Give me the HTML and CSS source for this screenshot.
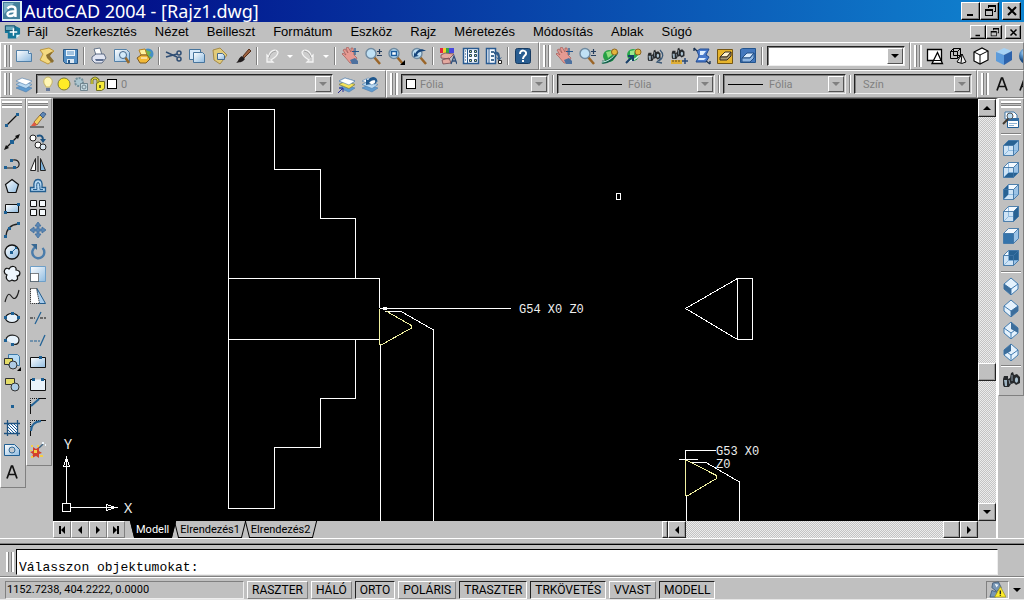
FILE: index.html
```html
<!DOCTYPE html>
<html lang="hu">
<head>
<meta charset="utf-8">
<title>AutoCAD 2004 - [Rajz1.dwg]</title>
<link rel="stylesheet" href="styles.css">
</head>
<body>
<svg class="sprite" aria-hidden="true">
  <defs>
    <linearGradient id="paper" x1="0" y1="0" x2="1" y2="1"><stop offset="0" stop-color="#fff"/><stop offset="1" stop-color="#8fbbe0"/></linearGradient>
    <radialGradient id="ball" cx=".35" cy=".3"><stop offset="0" stop-color="#cfe6fa"/><stop offset=".5" stop-color="#5a93c8"/><stop offset="1" stop-color="#1c4c82"/></radialGradient>
    <pattern id="diag" width="3" height="3" patternUnits="userSpaceOnUse"><path d="M0 0l3 3" stroke="#1d5f9e"/></pattern>
    <g id="hand"><path d="M2 3l2-1 3 4-2-5 2-1 3 5 0-4 2 0 1 7 3 3-3 5H9L4 10 1 7l1-1 3 2z" fill="#e59a92" stroke="#a55a58" stroke-width=".7"/><path d="M9 13l5-2 3 3v3h-6z" fill="#4d719f"/><path d="M14 1v7M11 4.500h7" stroke="#27578c" stroke-width="1.200"/></g>
    <g id="lens"><path d="M10 10l6 7" stroke="#9a6528" stroke-width="2.500"/><circle cx="7" cy="6.500" r="5" fill="#bfe0f4" stroke="#6f8aa0" stroke-width="1.400"/></g>
    <g id="cube"><path d="M1.500 6.500h10v10h-10z" fill="#cfe4f6"/><path d="M1.500 6.500l5-5h10l-5 5z" fill="#f3f9ff"/><path d="M11.500 6.500l5-5v10l-5 5z" fill="#9cc3e6"/></g>
    <path id="wire" d="M6.500 1.500v10h10M6.500 11.500l-5 5" fill="none" stroke="#7fb0da" stroke-width=".8"/>
    <path id="edges" d="M1.500 6.500h10v10h-10zM1.500 6.500l5-5h10l-5 5M16.500 1.500v10l-5 5" fill="none" stroke="#3f75a6" stroke-width=".9"/>
    <g id="iso"><path d="M9 1l7 6v5l-7 6-7-6V7z" fill="#e5f2fd" stroke="#417baf"/><path d="M2 7l7 5 7-5M9 12v6" fill="none" stroke="#417baf"/></g>
    <g id="binos"><path d="M1 8l1-3h4v3l2-1 1-5 2-1 1 3 3-1 3 3v6l-4 2-2-2-3 1-2 3H2l-1-2z" fill="#26292c"/><path d="M2 9h3v6H3z" fill="#9fb4c2"/><ellipse cx="14.500" cy="9" rx="1.600" ry="2.800" fill="#a9c0cf"/><path d="M10 4v6M7 9l1 4" stroke="#8b9aa6"/></g>
    <g id="stack"><path d="M1 13l6-3 10 3-6 4z" fill="#5f9bd0" stroke="#4e7cab" stroke-width=".6"/><path d="M1 9.500l6-3 10 3-6 4z" fill="#b9d9f2" stroke="#4e7cab" stroke-width=".6"/><path d="M1 6l6-3 10 3-6 4z" fill="#fff" stroke="#4e7cab" stroke-width=".6"/></g>
  </defs>
  <symbol id="i-new" viewBox="0 0 18 18"><path d="M1.500 3.500h12l3 3v8h-15z" fill="url(#paper)" stroke="#5280a8"/><path d="M13.500 3.500v3h3" fill="#fff" stroke="#5280a8"/></symbol>
  <symbol id="i-open" viewBox="0 0 18 18"><path d="M2 3l9-2 5 3-5 5 2 6-3 2-8-4 3-6z" fill="#f4d980" stroke="#b58a28" stroke-width=".8"/><path d="M8 8l7-4-3 5 4 5-2 2-5-5" fill="#8a6f31"/></symbol>
  <symbol id="i-save" viewBox="0 0 18 18"><path d="M2.500 2.500h14v14h-12l-2-2z" fill="#548fc4" stroke="#285784"/><path d="M5 3h9v6H5z" fill="#edf5fb"/><path d="M6 5h7M6 7h7" stroke="#548fc4"/><path d="M6 12h7v4H6z" fill="#dce9f4"/><path d="M7 13h2v3H7z" fill="#285784"/></symbol>
  <symbol id="i-print" viewBox="0 0 18 18"><path d="M4 2l6-1 2 7H6z" fill="#fff" stroke="#66758a"/><path d="M2 10l4-3h8l2 4-4 5H5l-3-3z" fill="#e1e5f2" stroke="#5c6a82"/><path d="M5 12h9l-1 2H6z" fill="#5d6f91"/></symbol>
  <symbol id="i-preview" viewBox="0 0 18 18"><path d="M1.500 2.500h12l3 3v9h-15z" fill="url(#paper)" stroke="#5280a8"/><path d="M12 10l4 6" stroke="#986a2b" stroke-width="2.500"/><circle cx="10" cy="8" r="3.500" fill="#d3eafa" stroke="#46678a"/></symbol>
  <symbol id="i-publish" viewBox="0 0 18 18"><circle cx="12" cy="7" r="5.500" fill="#458fc5"/><path d="M10 3l5 2-2 4 3 1-3 3-3-6z" fill="#70b650"/><path d="M3 3l6-1 2 6H5z" fill="#fff2a0" stroke="#b7811d"/><path d="M1 11l4-3h6l3 4-4 4H4z" fill="#f2b937" stroke="#7d5b24"/><path d="M5 11h6" stroke="#fff"/></symbol>
  <symbol id="i-cut" viewBox="0 0 18 18"><path d="M1 5l11 5M1 10l11-3" stroke="#304e74" stroke-width="1.500"/><circle cx="14" cy="6" r="2" fill="none" stroke="#304e74" stroke-width="1.500"/><circle cx="14" cy="12" r="2" fill="none" stroke="#304e74" stroke-width="1.500"/></symbol>
  <symbol id="i-copyclip" viewBox="0 0 18 18"><path d="M1.500 2.500h11v10h-11z" fill="#d9eafa" stroke="#47749c"/><path d="M5.500 5.500h9l2 2v8h-11z" fill="url(#paper)" stroke="#47749c"/></symbol>
  <symbol id="i-paste" viewBox="0 0 18 18"><path d="M2 3l7-2 7 7-7 9-6-4z" fill="#e1cb7a" stroke="#a58a48"/><path d="M6.500 6.500h5l2 2v4h-7z" fill="url(#paper)" stroke="#45698b"/></symbol>
  <symbol id="i-brush" viewBox="0 0 18 18"><path d="M9 9l6-7 2 2-7 7z" fill="#9c6240" stroke="#552e1a"/><path d="M8 9l3 3c-3 4-6 3-9 4 3-2 2-5 6-7z" fill="#201c1d"/></symbol>
  <symbol id="i-undo" viewBox="0 0 18 18"><path d="M4 8v7h6l-2-2q7-4 7-8-2-3-6-1Q6 6 6 10z" fill="#cdcdcd" stroke="#f4f4f4" stroke-width="1.300"/><path d="M6 11q1-6 7-7" fill="none" stroke="#a4a4a4"/></symbol>
  <symbol id="i-redo" viewBox="0 0 18 18"><path d="M14 8v7H8l2-2Q3 9 3 5q2-3 6-1 3 2 3 6z" fill="#cdcdcd" stroke="#f4f4f4" stroke-width="1.300"/><path d="M12 11q-1-6-7-7" fill="none" stroke="#a4a4a4"/></symbol>
  <symbol id="i-pan" viewBox="0 0 18 18"><use href="#hand"/></symbol>
  <symbol id="i-zoomrt" viewBox="0 0 18 18"><use href="#lens"/><path d="M15.500 2v5M13 4.500h5M13 8.500h5" stroke="#243d5d" stroke-width="1.200"/></symbol>
  <symbol id="i-zoomwin" viewBox="0 0 18 18"><use href="#lens"/><path d="M4.500 4.500h5v4h-5z" fill="#fff" stroke="#1b5c9d" stroke-width="1.500"/><path d="M18 13v5h-5z"/></symbol>
  <symbol id="i-zoomprev" viewBox="0 0 18 18"><use href="#lens"/><path d="M4 5v5l5-1-2-1c1-3 4-4 9-4-4-3-9-2-11 3z" fill="#15447b"/></symbol>
  <symbol id="i-props" viewBox="0 0 18 18"><path d="M1 1h3v5H1z" fill="#df2742"/><path d="M4 1h3v5H4z" fill="#efcf2f"/><path d="M7 1h3v5H7z" fill="#36a745"/><path d="M10 1h5v5h-5z" fill="#4848dd"/><path d="M2 8l4-2 9 1-5 5-8-1zM3 13l7-2 2 5-8 1z" fill="#e4aaa0" stroke="#754951" stroke-width=".8"/><path d="M12 17l3-8 3 8M13 14h4" fill="none" stroke="#2e4e7a" stroke-width="1.300"/></symbol>
  <symbol id="i-design" viewBox="0 0 18 18"><path d="M1.500 1.500h15v15h-15z" fill="#f6faff" stroke="#285a91" stroke-width="1.500"/><path d="M5.500 2v14" stroke="#285a91"/><path d="M3 4h1M3 7h1M3 10h1M3 13h1" stroke="#244667"/><path d="M7.500 3.500h2v2h-2zM12.500 3.500h2v2h-2zM7.500 7.500h2v2h-2zM12.500 7.500h2v2h-2zM7.500 12.500h2v2h-2zM12.500 12.500h2v2h-2z" fill="#dbe98e" stroke="#234461"/></symbol>
  <symbol id="i-palette" viewBox="0 0 18 18"><path d="M1.500 1.500h9v15h-9z" fill="#f4f9ff" stroke="#285a91" stroke-width="1.500"/><path d="M4 2v14" stroke="#285a91"/><path d="M6 4h3v2H6zM6 8h3v2H6zM6 12h3v2H6z" fill="#456d93"/><path d="M9 5q6-2 6 6l2-1-3 4-3-4 2 1q0-4-4-4z" fill="#315b89"/><path d="M13.500 13.500h3v3h-3z" fill="#fff" stroke="#222"/></symbol>
  <symbol id="i-help" viewBox="0 0 18 18"><rect x="1.500" y="1.500" width="15" height="15" rx="2" fill="#285d91" stroke="#163a61"/><path d="M6 7c0-5 7-4 6 0-1 2-3 2-3 5M9 13v2" fill="none" stroke="#fff" stroke-width="2"/></symbol>
  <symbol id="i-orbit" viewBox="0 0 18 18"><circle cx="8" cy="9" r="6" fill="#269f45"/><path d="M5 5l5-1 1 4-4 3z" fill="#8fdf7d"/><path d="M1 15C6 16 13 12 16 5" fill="none" stroke="#116149" stroke-width="3"/><path d="M1 15C6 15 12 11 16 5" fill="none" stroke="#d0f2ec"/><circle cx="13.500" cy="5" r="3" fill="#e4b63c" stroke="#8d6522"/></symbol>
  <symbol id="i-corbit" viewBox="0 0 18 18"><circle cx="9" cy="8" r="6" fill="#29a94c"/><path d="M6 4l5-1-1 5-4 1z" fill="#9be98d"/><path d="M5 14Q13 13 16 6" fill="none" stroke="#d0f2ec" stroke-width="1.500"/><circle cx="14" cy="5" r="3" fill="#e4b63c" stroke="#8d6522"/><path d="M2 16l6-6M4 9h5v5" stroke="#173e68" stroke-width="2" fill="none"/></symbol>
  <symbol id="i-swivel" viewBox="0 0 18 18"><g transform="translate(0 2) scale(.75)"><use href="#binos"/></g><path d="M13 3q6 6-1 11M14 11l-4 4 5 1" fill="none" stroke="#3b5875" stroke-width="1.300"/></symbol>
  <symbol id="i-dist" viewBox="0 0 18 18"><g transform="translate(1 0) scale(.75)"><use href="#binos"/></g><path d="M1 13h11v4H1z" fill="#dfae36"/><path d="M3 13v2M6 13v2M9 13v2" stroke="#584312"/><path d="M12 14h6M15 11v6" stroke="#274878" stroke-width="1.500"/></symbol>
  <symbol id="i-clip" viewBox="0 0 18 18"><path d="M4 4l3-2h9l-3 6 3 2-3 5H3l3-6z" fill="#4a7bcb" stroke="#234c92"/><path d="M7 4h6l-3 4H7zM6 11h7l-2 2H5z" fill="#e2f0ff"/><path d="M1 1l3 3M1 1v3M17 17l-4-3M17 17v-3" stroke="#152f51" stroke-width="1.300"/></symbol>
  <symbol id="i-clipon" viewBox="0 0 18 18"><path d="M1.500 2.500h15v14h-15z" fill="#e6b42c" stroke="#765612"/><path d="M4 10l5-5h6l-4 5z" fill="#fff3cf" stroke="#382f24"/><path d="M4 10h7l4-5v4l-4 4H4z" fill="#a59878" stroke="#382f24"/></symbol>
  <symbol id="i-clipback" viewBox="0 0 18 18"><path d="M1.500 2.500l2-1h13v14h-15z" fill="#4478bd" stroke="#23548d"/><path d="M3 11l5-5h7l-4 5z" fill="#d8eafc" stroke="#234f85"/><path d="M3 11h8l4-5v5l-4 4H3z" fill="#8fb6e2" stroke="#234f85"/></symbol>
  <symbol id="i-wire2" viewBox="0 0 18 18"><path d="M1.500 2.500h14v11h-14z" fill="#fff" stroke="#000" stroke-width="1.300"/><path d="M6 16.500l5.500-11 5 11z" fill="#fff" stroke="#000" stroke-width="1.300"/><path d="M6 13.500h9.500" stroke="#000"/></symbol>
  <symbol id="i-wire3" viewBox="0 0 18 18"><path d="M1.500 4.500h7v7h-7zM1.500 4.500l3-3h7l-3 3M11.500 1.500v7l-3 3M4.500 1.500v7h7" fill="none" stroke="#000"/><path d="M8 15l5-8 4 8q-4 3-9 0z" fill="#eee" stroke="#000"/><path d="M13 7l-1 9" stroke="#000"/></symbol>
  <symbol id="i-hidden" viewBox="0 0 18 18"><path d="M2 5l8-4 6 3v9l-8 4-6-3z" fill="#fff" stroke="#000" stroke-width="1.200"/><path d="M2 5l6 3 8-4M8 8v9" fill="none" stroke="#000"/></symbol>
  <symbol id="i-flat" viewBox="0 0 18 18"><path d="M1 5l8-4 8 3-8 4z" fill="#a6d2f5"/><path d="M1 5l8 3v10l-8-4z" fill="#5c9bdb"/><path d="M9 8l8-4v9l-8 5z" fill="#2d63ac"/></symbol>
  <symbol id="i-ball" viewBox="0 0 18 18"><circle cx="9" cy="9" r="8" fill="url(#ball)"/></symbol>
  <symbol id="i-layers" viewBox="0 0 18 18"><use href="#stack"/></symbol>
  <symbol id="i-laycur" viewBox="0 0 18 18"><use href="#stack"/><path d="M1 9.500l6-3 10 3-6 4z" fill="#f6e35b" stroke="#8b8636" stroke-width=".7"/><path d="M1 6l6-3 10 3-6 4z" fill="#fff" stroke="#4e7cab" stroke-width=".6"/><path d="M0 18l5-5M1 13h4v4" fill="none" stroke="#2e3196"/></symbol>
  <symbol id="i-layprev" viewBox="0 0 18 18"><use href="#stack"/><path d="M5 4v6l5-1-2-1q2-3 6-3 1 2-1 5 5-4 2-7-4-3-8 2z" fill="#1f578d"/></symbol>
  <symbol id="i-bulb" viewBox="0 0 14 16"><path d="M4 9C1 5 4 1 7 1s6 4 3 8l-1 2H5z" fill="#fff6b4" stroke="#c4b464"/><path d="M5 12h4v3H5z" fill="#66799b"/></symbol>
  <symbol id="i-sun" viewBox="0 0 16 16"><circle cx="8" cy="8" r="6" fill="#ffeb26" stroke="#7d7a36"/></symbol>
  <symbol id="i-vp" viewBox="0 0 16 16"><circle cx="6" cy="6" r="4" fill="#aac5cf" stroke="#738e99" stroke-width="2" stroke-dasharray="2 1"/><path d="M7.500 7.500h7v7h-7z" fill="#c3d7df" stroke="#71858f"/><circle cx="11" cy="11" r="2" fill="none" stroke="#71858f"/></symbol>
  <symbol id="i-lock" viewBox="0 0 16 16"><path d="M2 8V4q3-4 6 0v4" fill="none" stroke="#77772e" stroke-width="3"/><path d="M2 8V4q3-4 6 0v4" fill="none" stroke="#f4e93c"/><path d="M6.500 7.500l3-2h5v7l-3 2h-5z" fill="#f4e93c" stroke="#6d6d25"/><path d="M9 9h2v3H9z" fill="#6d6d25"/></symbol>
  <symbol id="i-textstyle" viewBox="0 0 18 18"><path d="M4 15.500L8.500 3h1L14 15.500M5.500 11.500h7" fill="none" stroke="#111" stroke-width="1.700"/></symbol>
  <symbol id="i-line" viewBox="0 0 18 18"><path d="M3 15L15 3" stroke="#111" stroke-width="1.300"/><path d="M2 13h3v3H2zM13 2h3v3h-3z" fill="#1d6094"/></symbol>
  <symbol id="i-xline" viewBox="0 0 18 18"><path d="M3 15L15 3" stroke="#111" stroke-width="1.300"/><path d="M1 17l2-5 3 3zM17 1l-2 5-3-3z" fill="#111"/><path d="M7 7h4v4H7z" fill="#1d6094"/></symbol>
  <symbol id="i-pline" viewBox="0 0 18 18"><path d="M3 13h10c5-1 4-9-3-8H7" fill="none" stroke="#222" stroke-width="1.200"/><path d="M1 11h3v3H1zM10 11h3v3h-3zM7 4h3v3H7z" fill="#1d6094"/></symbol>
  <symbol id="i-poly" viewBox="0 0 18 18"><path d="M9 2.500l6.500 5-2.500 8H5l-2.500-8z" fill="url(#paper)" stroke="#111" stroke-width="1.200"/></symbol>
  <symbol id="i-rect" viewBox="0 0 18 18"><path d="M2.500 5.500h13v8h-13z" fill="url(#paper)" stroke="#111"/><path d="M1 12h3v3H1zM14 4h3v3h-3z" fill="#1d6094"/></symbol>
  <symbol id="i-arc" viewBox="0 0 18 18"><path d="M3 15Q4 4 15 3" fill="none" stroke="#222" stroke-width="1.300"/><path d="M1 14h3v3H1zM5 6h3v3H5zM14 1h3v3h-3z" fill="#1d6094"/></symbol>
  <symbol id="i-circle" viewBox="0 0 18 18"><circle cx="9" cy="9" r="7" fill="url(#paper)" stroke="#111" stroke-width="1.300"/><path d="M9 9l4-4" stroke="#1d6094"/><path d="M7 8h3v3H7zM12 4h2v2h-2z" fill="#1d6094"/></symbol>
  <symbol id="i-cloud" viewBox="0 0 18 18"><path d="M4 10C-1 8 2 1 6 4c2-4 8-3 7 1 6 1 4 6 1 6 2 4-2 6-5 4-4 3-7-2-5-5z" fill="#eef6fd" stroke="#111" stroke-width="1.200"/></symbol>
  <symbol id="i-spline" viewBox="0 0 18 18"><path d="M2 15C5 4 7 7 9 10s5 2 7-7" fill="none" stroke="#222" stroke-width="1.200"/></symbol>
  <symbol id="i-ellipse" viewBox="0 0 18 18"><ellipse cx="9" cy="9" rx="6.500" ry="4.500" fill="#e7f2fb" stroke="#111" stroke-width="1.200"/><path d="M1 7h3v3H1zM14 7h3v3h-3zM8 3h3v3H8z" fill="#1d6094"/></symbol>
  <symbol id="i-earc" viewBox="0 0 18 18"><path d="M3 9c0-7 13-6 13 0 0 4-3 5-6 4" fill="#e7f2fb" stroke="#222" stroke-width="1.200"/><path d="M1 8h3v3H1zM8 12h3v3H8z" fill="#1d6094"/></symbol>
  <symbol id="i-insert" viewBox="0 0 18 18"><path d="M5.500 1.500h9l2 2v9h-11z" fill="#b7dbf4" stroke="#3d79a7"/><path d="M1.500 5.500h8v6h-8z" fill="#e4dc68" stroke="#333"/><circle cx="10" cy="12" r="4" fill="#aecbe5" stroke="#333"/><path d="M18 14v4h-4z"/></symbol>
  <symbol id="i-block" viewBox="0 0 18 18"><path d="M2.500 3.500h9v6h-9z" fill="#e4dc68" stroke="#333"/><circle cx="12" cy="12" r="4" fill="#aecbe5" stroke="#333"/></symbol>
  <symbol id="i-point" viewBox="0 0 18 18"><path d="M8 8h3v3H8z" fill="#1d6094"/></symbol>
  <symbol id="i-hatch" viewBox="0 0 18 18"><path d="M5 5h9v9H5z" fill="#fff"/><path d="M5 5h9v9H5z" fill="url(#diag)"/><path d="M1 4.500h16M1 14.500h16M4.500 1v16M14.500 1v16" stroke="#1d5280" stroke-width="1.300"/></symbol>
  <symbol id="i-region" viewBox="0 0 18 18"><path d="M1.500 3.500h10l5 5v6h-15z" fill="url(#paper)" stroke="#205f93"/><circle cx="9" cy="9" r="3" fill="#c3c9cf" stroke="#326b98"/></symbol>
  <symbol id="i-erase" viewBox="0 0 18 18"><path d="M1 16h14" stroke="#222"/><path d="M5 11l6-7 3 2-6 8z" fill="#f3cf5f" stroke="#835b23" stroke-width=".8"/><path d="M11 4l3-3 3 2-3 4z" fill="#5d86b5" stroke="#31527a" stroke-width=".8"/><path d="M2 15l3-4 3 3-2 1z" fill="#e05a43"/></symbol>
  <symbol id="i-copy" viewBox="0 0 18 18"><circle cx="4" cy="5" r="3" fill="#fff" stroke="#222"/><circle cx="9" cy="12" r="3" fill="#fff" stroke="#222"/><circle cx="14" cy="14" r="3" fill="#dbe8f2" stroke="#222"/><path d="M8 3q6-2 6 4" fill="none" stroke="#1d5280" stroke-width="2"/><path d="M11 6h6l-3 4z" fill="#1d5280"/></symbol>
  <symbol id="i-mirror" viewBox="0 0 18 18"><path d="M1.500 15.500l5-12v12z" fill="#fff" stroke="#222"/><path d="M11.500 3.500l5 12h-5z" fill="#7db3dd" stroke="#222"/><path d="M9 1v16" stroke="#222"/></symbol>
  <symbol id="i-offset" viewBox="0 0 18 18"><path d="M1.500 14.500v-4H5q-1-8 4-8t4 8h3.500v4z" fill="#b8d9f3" stroke="#235e90" stroke-width="1.300"/><path d="M4 12.500h4q-1-7 1-7 2 0 2 7h3" fill="none" stroke="#235e90"/></symbol>
  <symbol id="i-array" viewBox="0 0 18 18"><path d="M1.500 1.500h6v6h-6zM10.500 1.500h6v6h-6zM1.500 10.500h6v6h-6zM10.500 10.500h6v6h-6z" fill="#f4f8fb" stroke="#111"/></symbol>
  <symbol id="i-move" viewBox="0 0 18 18"><path d="M9 1l3 4h-2v3h3V6l4 3-4 3v-2h-3v3h2l-3 4-3-4h2v-3H5v2L1 9l4-3v2h3V5H6z" fill="#5a86b4" stroke="#41709e" stroke-width=".8"/></symbol>
  <symbol id="i-rotate" viewBox="0 0 18 18"><path d="M13.500 5a6 6 0 1 1-7-1" fill="none" stroke="#4a7cab" stroke-width="2.400"/><path d="M2 1h6v6z" fill="#386893"/></symbol>
  <symbol id="i-scale" viewBox="0 0 18 18"><path d="M1.500 1.500h15v15h-15z" fill="url(#paper)" stroke="#6e9fc8"/><path d="M1.500 8.500h8v8h-8z" fill="#fff" stroke="#111" stroke-dasharray="1 1"/></symbol>
  <symbol id="i-stretch" viewBox="0 0 18 18"><path d="M8 1.500l8.500 15H8z" fill="#a9cceb" stroke="#225c8d"/><path d="M1.500 1.500h6l3 15h-9z" fill="#fff" stroke="#111" stroke-dasharray="1 1"/></symbol>
  <symbol id="i-trim" viewBox="0 0 18 18"><path d="M1 9h5M11 9h6" stroke="#111" stroke-dasharray="3 1"/><path d="M6 15l6-12" stroke="#236396" stroke-width="1.300"/></symbol>
  <symbol id="i-extend" viewBox="0 0 18 18"><path d="M1 10h10" stroke="#236396" stroke-dasharray="3 1"/><path d="M11 15l5-11" stroke="#236396" stroke-width="1.300"/></symbol>
  <symbol id="i-breakpt" viewBox="0 0 18 18"><path d="M1.500 4.500h15v10h-15z" fill="url(#paper)" stroke="#111"/><path d="M10 3h3v3h-3z" fill="#1d6094"/></symbol>
  <symbol id="i-break" viewBox="0 0 18 18"><path d="M5 4.500H1.500v11h15v-11H13" fill="#eaf3fb" stroke="#111"/><path d="M3 3h3v3H3zM12 3h3v3h-3z" fill="#1d6094"/></symbol>
  <symbol id="i-chamfer" viewBox="0 0 18 18"><path d="M1.500 17V8M10 1.500h7" stroke="#111"/><path d="M1.500 8V1.500H10" fill="none" stroke="#111" stroke-dasharray="1 1"/><path d="M2 9l8-7" stroke="#236396" stroke-width="2"/></symbol>
  <symbol id="i-fillet" viewBox="0 0 18 18"><path d="M1.500 17v-6M11 1.500h6" stroke="#111"/><path d="M1.500 8V1.500H10" fill="none" stroke="#111" stroke-dasharray="1 1"/><path d="M2 12Q2 3 12 2" fill="none" stroke="#236396" stroke-width="2"/></symbol>
  <symbol id="i-explode" viewBox="0 0 18 18"><path d="M10 7l4-4" stroke="#446681" stroke-width="1.500"/><path d="M13 1h2v2h-2zM16 3h1v2h-1z" fill="#eef6fc"/><path d="M4 6l3 2 3-2v4l3 2-3 1v4l-3-2-4 2 1-4-3-2 3-1z" fill="#d2402c"/><path d="M2 4h2v2H2zM8 4h2v2H8zM5 9h3v3H5zM11 14h3v2h-3zM2 15h2v2H2zM1 9h2v1H1z" fill="#f4cf46"/></symbol>
  <symbol id="i-views" viewBox="0 0 18 18"><path d="M3 1h9l3 3v4H3z" fill="#fff" stroke="#4179a8"/><path d="M5.500 7.500h11v9h-11z" fill="#fff" stroke="#235f94"/><path d="M5 7h12v3H5z" fill="#326da2"/><path d="M7 12.500h8M7 14.500h5" stroke="#8eb4d4"/><circle cx="8" cy="5" r="3" fill="#bcddf4" stroke="#555"/><path d="M6 8l-5 5" stroke="#42392f" stroke-width="2"/></symbol>
  <symbol id="i-top" viewBox="0 0 18 18"><use href="#cube"/><use href="#wire"/><path d="M1.500 6.500l5-5h10l-5 5z" fill="#286293"/><use href="#edges"/></symbol>
  <symbol id="i-bottom" viewBox="0 0 18 18"><use href="#cube"/><path d="M1.500 16.500l5-5h10l-5 5z" fill="#286293"/><use href="#wire"/><use href="#edges"/></symbol>
  <symbol id="i-left" viewBox="0 0 18 18"><use href="#cube"/><path d="M1.500 6.500l5-5v10l-5 5z" fill="#286293"/><use href="#wire"/><use href="#edges"/></symbol>
  <symbol id="i-right" viewBox="0 0 18 18"><use href="#cube"/><use href="#wire"/><path d="M11.500 6.500l5-5v10l-5 5z" fill="#286293"/><use href="#edges"/></symbol>
  <symbol id="i-front" viewBox="0 0 18 18"><use href="#cube"/><path d="M1.500 6.500h10v10h-10z" fill="#3574ab"/><use href="#edges"/></symbol>
  <symbol id="i-back" viewBox="0 0 18 18"><use href="#cube"/><path d="M6.500 1.500h10v10h-10z" fill="#286293"/><use href="#wire"/><use href="#edges"/></symbol>
  <symbol id="i-sw" viewBox="0 0 18 18"><use href="#iso"/><path d="M2 7l7 5v6l-7-6z" fill="#3c6e9c"/></symbol>
  <symbol id="i-se" viewBox="0 0 18 18"><use href="#iso"/><path d="M9 12l7-5v5l-7 6z" fill="#3c6e9c"/></symbol>
  <symbol id="i-ne" viewBox="0 0 18 18"><use href="#iso"/><path d="M9 1l7 6v5L9 8z" fill="#3c6e9c"/></symbol>
  <symbol id="i-nw" viewBox="0 0 18 18"><use href="#iso"/><path d="M9 1L2 7v5l7-4z" fill="#3c6e9c"/></symbol>
  <symbol id="i-camera" viewBox="0 0 18 18"><use href="#binos"/></symbol>
  <symbol id="i-tray" viewBox="0 0 18 18"><path d="M4 2l6-1 3 6-5 4-5-4zM3 10l6 2-2 5H1z" fill="#7796b5" stroke="#35516e" stroke-width=".8"/><path d="M6 3l4 1-2 3z" fill="#eef6fc"/><path d="M12 6l6 11H6z" fill="#ffed28" stroke="#a09620" stroke-width=".8"/><path d="M12 10v4M12 15v1" stroke="#222" stroke-width="1.500"/></symbol>
  <symbol id="w-min" viewBox="0 0 14 12"><path d="M3 9h6v2H3z"/></symbol>
  <symbol id="w-restore" viewBox="0 0 14 12"><path d="M5 0h8v7h-2V6h1V2H6v1H5zM2 4h8v7H2zm1 2v4h6V6z" fill-rule="evenodd"/></symbol>
  <symbol id="w-close" viewBox="0 0 14 12"><path d="M3 2l8 8M11 2l-8 8" stroke="#000" stroke-width="2"/></symbol>
</svg>

<header class="titlebar">
  <svg class="logo" viewBox="0 0 20 20" aria-hidden="true"><path d="M0 0h20v20H0z" fill="#dcecf2"/><path d="M1 1h17v17H1z" fill="#45809c"/><path d="M2 2h10L2 13z" fill="#7fb2c6"/><path d="M5.500 7.500c2-3 8-2.500 8 1V16M13 10.500c-9-1-9 4.500-5 4.500 3 0 5-1.500 5-4" fill="none" stroke="#fff" stroke-width="2.400"/></svg>
  <h1>AutoCAD 2004 - [Rajz1.dwg]</h1>
  <div class="winbtns">
    <button aria-label="Kis méret"><svg><use href="#w-min"/></svg></button><button aria-label="Visszaállítás"><svg><use href="#w-restore"/></svg></button><button class="close" aria-label="Bezárás"><svg><use href="#w-close"/></svg></button>
  </div>
</header>

<nav class="menubar">
  <svg class="doc" viewBox="0 0 18 16" aria-hidden="true"><path d="M1 1h10l6 3v6l-4 5H4L4 9H1z" fill="#14779a"/><path d="M1.500 1.500h10v5h-10z" fill="#6ba9bd" stroke="#164f69"/><path d="M10 4v8M6 8h8" stroke="#fff" stroke-width="1.500"/><path d="M13 11h4l-4 4z" fill="#dff5fb"/></svg>
  <button>Fájl</button><button>Szerkesztés</button><button>Nézet</button><button>Beilleszt</button><button>Formátum</button><button>Eszköz</button><button>Rajz</button><button>Méretezés</button><button>Módosítás</button><button>Ablak</button><button>Súgó</button>
  <div class="winbtns small">
    <button aria-label="Rajz kis méret"><svg><use href="#w-min"/></svg></button><button aria-label="Rajz visszaállítása"><svg><use href="#w-restore"/></svg></button><button class="close" aria-label="Rajz bezárása"><svg><use href="#w-close"/></svg></button>
  </div>
</nav>

<div class="toolrow">
  <div class="bar standard">
    <i class="grip"></i>
    <button aria-label="Új"><svg><use href="#i-new"/></svg></button><button aria-label="Megnyitás"><svg><use href="#i-open"/></svg></button><button aria-label="Mentés"><svg><use href="#i-save"/></svg></button><i class="sep"></i>
    <button aria-label="Nyomtatás"><svg><use href="#i-print"/></svg></button><button aria-label="Nyomtatási kép"><svg><use href="#i-preview"/></svg></button><button aria-label="Publikálás"><svg><use href="#i-publish"/></svg></button><i class="sep"></i>
    <button aria-label="Kivágás"><svg><use href="#i-cut"/></svg></button><button aria-label="Másolás vágólapra"><svg><use href="#i-copyclip"/></svg></button><button aria-label="Beillesztés"><svg><use href="#i-paste"/></svg></button><button aria-label="Tulajdonságmásolás"><svg><use href="#i-brush"/></svg></button><i class="sep"></i>
    <button aria-label="Vissza"><svg><use href="#i-undo"/></svg></button><button class="caret" aria-label="Vissza lista"></button><button aria-label="Ismét"><svg><use href="#i-redo"/></svg></button><button class="caret" aria-label="Ismét lista"></button><i class="sep"></i>
    <button aria-label="Eltolás"><svg><use href="#i-pan"/></svg></button><button aria-label="Zoom"><svg><use href="#i-zoomrt"/></svg></button><button aria-label="Zoom ablak"><svg><use href="#i-zoomwin"/></svg></button><button aria-label="Zoom előző"><svg><use href="#i-zoomprev"/></svg></button><i class="sep"></i>
    <button aria-label="Tulajdonságok"><svg><use href="#i-props"/></svg></button><button aria-label="DesignCenter"><svg><use href="#i-design"/></svg></button><button aria-label="Eszközpaletták"><svg><use href="#i-palette"/></svg></button><i class="sep"></i>
    <button aria-label="Súgó"><svg><use href="#i-help"/></svg></button>
  </div>
  <div class="bar orbitbar">
    <i class="grip"></i>
    <button aria-label="3D eltolás"><svg><use href="#i-pan"/></svg></button><button aria-label="3D zoom"><svg><use href="#i-zoomrt"/></svg></button><button aria-label="3D keringés"><svg><use href="#i-orbit"/></svg></button><button aria-label="Folyamatos keringés"><svg><use href="#i-corbit"/></svg></button><button aria-label="Elfordítás"><svg><use href="#i-swivel"/></svg></button><button aria-label="Távolság"><svg><use href="#i-dist"/></svg></button><button aria-label="Vágósíkok"><svg><use href="#i-clip"/></svg></button><button aria-label="Első vágósík"><svg><use href="#i-clipon"/></svg></button><button aria-label="Hátsó vágósík"><svg><use href="#i-clipback"/></svg></button><i class="sep"></i>
    <div class="combo view on"><select aria-label="Nézet"><option></option></select><i class="arrow"></i></div>
  </div>
  <div class="bar rest">
    <i class="grip"></i>
    <button aria-label="2D drótváz"><svg><use href="#i-wire2"/></svg></button><button aria-label="3D drótváz"><svg><use href="#i-wire3"/></svg></button><button aria-label="Takart"><svg><use href="#i-hidden"/></svg></button><button aria-label="Síkárnyalt"><svg><use href="#i-flat"/></svg></button><button aria-label="Gouraud"><svg><use href="#i-ball"/></svg></button>
  </div>
</div>

<div class="toolrow">
  <div class="bar layerbar">
    <i class="grip"></i>
    <button aria-label="Fóliák"><svg><use href="#i-layers"/></svg></button>
    <div class="combo layer"><svg><use href="#i-bulb"/></svg><svg><use href="#i-sun"/></svg><svg><use href="#i-vp"/></svg><svg><use href="#i-lock"/></svg><i class="swatch"></i><select aria-label="Fólia"><option>0</option></select><i class="arrow"></i></div>
    <button aria-label="Objektum fóliája"><svg><use href="#i-laycur"/></svg></button><button aria-label="Előző fólia"><svg><use href="#i-layprev"/></svg></button>
  </div>
  <div class="bar propbar">
    <i class="grip"></i>
    <div class="combo color"><i class="swatch"></i><select aria-label="Szín"><option>Fólia</option></select><i class="arrow"></i></div><i class="sep"></i>
    <div class="combo ltype"><i class="stroke"></i><select aria-label="Vonaltípus"><option>Fólia</option></select><i class="arrow"></i></div><i class="sep"></i>
    <div class="combo weight"><i class="stroke"></i><select aria-label="Vonalvastagság"><option>Fólia</option></select><i class="arrow"></i></div><i class="sep"></i>
    <div class="combo plot"><select aria-label="Nyomtatási stílus"><option>Szín</option></select><i class="arrow"></i></div>
  </div>
  <div class="bar rest">
    <i class="grip"></i>
    <button aria-label="Szöveg"><svg><use href="#i-textstyle"/></svg></button><button aria-label="Szövegstílus"><svg><use href="#i-textstyle"/></svg></button>
  </div>
</div>

<main class="work">
  <div class="side left">
    <div class="vbar"><i class="grip"></i>
      <button aria-label="Vonal"><svg><use href="#i-line"/></svg></button><button aria-label="Szerkesztővonal"><svg><use href="#i-xline"/></svg></button><button aria-label="Vonallánc"><svg><use href="#i-pline"/></svg></button><button aria-label="Poligon"><svg><use href="#i-poly"/></svg></button><button aria-label="Téglalap"><svg><use href="#i-rect"/></svg></button><button aria-label="Ív"><svg><use href="#i-arc"/></svg></button><button aria-label="Kör"><svg><use href="#i-circle"/></svg></button><button aria-label="Felhő"><svg><use href="#i-cloud"/></svg></button><button aria-label="Spline"><svg><use href="#i-spline"/></svg></button><button aria-label="Ellipszis"><svg><use href="#i-ellipse"/></svg></button><button aria-label="Ellipszisív"><svg><use href="#i-earc"/></svg></button><button aria-label="Blokk beillesztése"><svg><use href="#i-insert"/></svg></button><button aria-label="Blokk"><svg><use href="#i-block"/></svg></button><button aria-label="Pont"><svg><use href="#i-point"/></svg></button><button aria-label="Sraffozás"><svg><use href="#i-hatch"/></svg></button><button aria-label="Régió"><svg><use href="#i-region"/></svg></button><button aria-label="Bekezdés"><svg><use href="#i-textstyle"/></svg></button>
    </div>
    <div class="vbar"><i class="grip"></i>
      <button aria-label="Törlés"><svg><use href="#i-erase"/></svg></button><button aria-label="Másolás"><svg><use href="#i-copy"/></svg></button><button aria-label="Tükrözés"><svg><use href="#i-mirror"/></svg></button><button aria-label="Párhuzamos"><svg><use href="#i-offset"/></svg></button><button aria-label="Kiosztás"><svg><use href="#i-array"/></svg></button><button aria-label="Mozgatás"><svg><use href="#i-move"/></svg></button><button aria-label="Forgatás"><svg><use href="#i-rotate"/></svg></button><button aria-label="Lépték"><svg><use href="#i-scale"/></svg></button><button aria-label="Nyújtás"><svg><use href="#i-stretch"/></svg></button><button aria-label="Metszés"><svg><use href="#i-trim"/></svg></button><button aria-label="Meghosszabbítás"><svg><use href="#i-extend"/></svg></button><button aria-label="Megtörés pontban"><svg><use href="#i-breakpt"/></svg></button><button aria-label="Megtörés"><svg><use href="#i-break"/></svg></button><button aria-label="Letörés"><svg><use href="#i-chamfer"/></svg></button><button aria-label="Lekerekítés"><svg><use href="#i-fillet"/></svg></button><button aria-label="Szétvetés"><svg><use href="#i-explode"/></svg></button>
    </div>
  </div>

  <section class="document">
    <div class="viewrow">
      <svg class="drawing" role="img" aria-label="Rajzterület">
        <g transform="translate(-53 -99)" fill="none" stroke="#fff" shape-rendering="crispEdges">
          <path d="M355.500 278.500V218.500H320.500V169.500H274.500V109.500H228.500V508.500H274.500V447.500H320.500V398.500H355.500V339.500"/>
          <path d="M379.500 308V278.500H228.500M228.500 339.500H379.500M380 308.500H511M380.500 345V900M385 311.500H401L433.500 330V900"/>
          <circle cx="385" cy="308.500" r="2" fill="#fff" stroke="none"/>
          <path d="M379.500 309V344.500H382L411.500 328V325.500L386 311" stroke="#f0f0a0"/>
          <path d="M685.500 308.500L737.500 278.500H752.500V339.500H737.500ZM737.500 278.500V339.500"/>
          <path d="M616.500 193.500h4v6h-4z"/>
          <path d="M716 450.500H685.500V459.500M679 459.500H698M686.500 496V900M691 462.500H706L739.500 482V900"/>
          <path d="M685.500 460V495.500H688L716.500 478.500V475.500L686 460" stroke="#f0f0a0"/>
          <path d="M62.500 503.500h8v8h-8zM66.500 503V457.500M63.500 466.500L66.500 457.500L69.500 466.500ZM71 507.500H116M106.500 504.500L116 507.500L106.500 510.500Z"/>
        </g>
        <g class="cadtext" transform="translate(-53 -99)"><text x="519" y="313">G54 X0 Z0</text><text x="716" y="455">G53 X0</text><text x="716" y="468">Z0</text><text class="axis" x="64" y="449">Y</text><text class="axis" x="124" y="513">X</text></g>
      </svg>
      <div class="vscroll"><button class="up" aria-label="Fel"></button><i class="track"></i><i class="thumb"></i><i class="track low"></i><button class="down" aria-label="Le"></button></div>
    </div>
    <div class="tabrow">
      <div class="tabnav"><button class="prev stop" aria-label="Első lap"></button><button class="prev" aria-label="Előző lap"></button><button class="next" aria-label="Következő lap"></button><button class="next stop" aria-label="Utolsó lap"></button></div>
      <div class="tabs"><button class="active">Modell</button><button>Elrendezés1</button><button>Elrendezés2</button></div>
      <div class="hscroll"><i class="split"></i><button class="prev" aria-label="Balra"></button><i class="track"></i><i class="thumb"></i><button class="next" aria-label="Jobbra"></button></div>
    </div>
  </section>

  <div class="side right">
    <div class="vbar"><i class="grip"></i>
      <button aria-label="Nevesített nézetek"><svg><use href="#i-views"/></svg></button><i class="hsep"></i>
      <button aria-label="Felülnézet"><svg><use href="#i-top"/></svg></button><button aria-label="Alulnézet"><svg><use href="#i-bottom"/></svg></button><button aria-label="Bal nézet"><svg><use href="#i-left"/></svg></button><button aria-label="Jobb nézet"><svg><use href="#i-right"/></svg></button><button aria-label="Elölnézet"><svg><use href="#i-front"/></svg></button><button aria-label="Hátulnézet"><svg><use href="#i-back"/></svg></button><i class="hsep"></i>
      <button aria-label="DNy izometrikus"><svg><use href="#i-sw"/></svg></button><button aria-label="DK izometrikus"><svg><use href="#i-se"/></svg></button><button aria-label="ÉK izometrikus"><svg><use href="#i-ne"/></svg></button><button aria-label="ÉNy izometrikus"><svg><use href="#i-nw"/></svg></button><i class="hsep"></i>
      <button aria-label="Kamera"><svg><use href="#i-camera"/></svg></button>
    </div>
  </div>
</main>

<div class="command"><i class="grip"></i><input type="text" aria-label="Parancssor" value="Válasszon objektumokat:"></div>

<footer class="status">
  <output class="coords">1152.7238, 404.2222, 0.0000</output>
  <button>RASZTER</button><button>HÁLÓ</button><button class="on">ORTO</button><button>POLÁRIS</button><button class="on">TRASZTER</button><button class="on">TRKÖVETÉS</button><button>VVAST</button><button class="on">MODELL</button>
  <button class="tray" aria-label="Kommunikációs központ"><svg><use href="#i-tray"/></svg></button><button class="more" aria-label="Állapotsor menü"></button>
</footer>
</body>
</html>
```
FILE: styles.css
```css
* { box-sizing: border-box; }
:root { --face: #c0c0c0; --shade: #808080; }
body {
  margin: 0; height: 100vh; overflow: hidden;
  display: flex; flex-direction: column;
  background: var(--face); color: #000;
  font-family: Roboto, "Liberation Sans", sans-serif; font-size: 12px;
}
.sprite { position: absolute; width: 0; height: 0; }
button, select, input { font: inherit; color: inherit; margin: 0; padding: 0; border: 0; border-radius: 0; background: none; }
button { display: flex; align-items: center; justify-content: center; flex: none; }
i { display: block; flex: none; }

/* title and menu */
.titlebar { flex: none; height: 22px; display: flex; align-items: center; gap: 2px; padding: 0 3px 0 2px; background: linear-gradient(90deg, #000080, #1084d0); color: #fff; }
.logo { width: 20px; height: 20px; }
h1 { flex: 1; margin: 0; font: 400 18px/22px "Noto Sans", sans-serif; white-space: nowrap; }
.winbtns { display: flex; }
.winbtns button { width: 19px; height: 18px; background: var(--face); border: 1px solid; border-color: #fff #000 #000 #fff; box-shadow: inset -1px -1px var(--shade); }
.winbtns svg { width: 14px; height: 12px; }
.winbtns .close { margin-left: 3px; }
.menubar { flex: none; height: 20px; display: flex; align-items: center; gap: 18px; padding: 0 3px 0 4px; font: 13px/18px "Liberation Sans", sans-serif; }
.menubar .doc { width: 17px; height: 16px; margin-right: -12px; }
.menubar .winbtns { margin-left: auto; }
.small button { width: 16px; height: 14px; }
.small svg { width: 11px; height: 9px; }

/* horizontal toolbars */
.toolrow { flex: none; height: 28px; display: flex; overflow: hidden; }
.bar { display: flex; align-items: center; flex: none; padding-left: 3px; border: 1px solid; border-color: #fff var(--shade) var(--shade) #fff; }
.bar > button { width: 23px; height: 24px; }
.bar > button svg, .vbar svg { width: 18px; height: 18px; }
.grip { width: 8px; height: 22px; border: solid #fff; border-width: 0 2px; background: linear-gradient(90deg, var(--shade) 1px, var(--face) 1px 3px, var(--shade) 3px); }
.sep { width: 6px; height: 18px; background: linear-gradient(90deg, transparent 2px, var(--shade) 2px 3px, #fff 3px 4px, transparent 4px); }
.standard { width: 539px; }
.orbitbar { width: 371px; }
.rest { flex: 1 0 0; overflow: hidden; }
.orbitbar .grip, .toolrow .rest .grip { margin-right: 1px; }
.bar > .caret { width: 13px; }
.caret::after { content: ""; border: 3px solid transparent; border-top-color: #fff; border-bottom: 0; }
.layerbar { width: 386px; }
.layerbar > .combo { margin: 0 2px 0 1px; }
.propbar { width: 591px; gap: 1px; }
.propbar .grip { margin-right: 2px; }

.combo { display: flex; align-items: center; height: 20px; padding: 0 1px 0 4px; border: 1px solid; border-color: #222 #eee #eee #222; box-shadow: inset 1px 1px var(--shade); font-size: 11px; color: var(--shade); }
.combo.on { background: #fff; }
.combo select { flex: 1; min-width: 0; height: 16px; appearance: none; outline: 0; }
.combo svg { width: 16px; height: 16px; margin-right: 1px; flex: none; }
.combo svg:first-child { width: 14px; }
.arrow { width: 16px; height: 16px; display: flex; align-items: center; justify-content: center; background: var(--face); border: 1px solid; border-color: #fff #555 #555 #fff; }
.arrow::after { content: ""; border: 4px solid transparent; border-top-color: var(--shade); border-bottom: 0; }
.on .arrow::after { border-top-color: #000; }
.swatch { width: 10px; height: 10px; border: 1px solid #000; background: #fff; margin-right: 4px; }
.stroke { height: 1px; background: #000; margin-right: 6px; }
.view { width: 138px; margin-left: 2px; }
.layer { width: 297px; }
.color { width: 148px; }
.ltype { width: 158px; }
.ltype .stroke { width: 60px; }
.weight { width: 123px; }
.weight .stroke { width: 35px; }
.plot { width: 118px; padding-left: 8px; }

/* work area */
.work { flex: 1; min-height: 0; display: flex; }
.side { flex: none; display: flex; align-items: flex-start; }
.side.left { width: 53px; }
.side.right { width: 26px; }
.vbar { width: 26px; display: flex; flex-direction: column; align-items: center; padding: 2px 0 4px; border: 1px solid; border-color: #fff var(--shade) var(--shade) #fff; }
.left .vbar { padding-right: 2px; }
.vbar .grip { width: 20px; height: 7px; margin-bottom: 1px; border-width: 2px 0; background: linear-gradient(var(--shade) 1px, var(--face) 1px 2px, var(--shade) 2px); }
.vbar button { width: 22px; height: 22px; }
.hsep { width: 20px; height: 6px; background: linear-gradient(transparent 2px, var(--shade) 2px 3px, #fff 3px 4px, transparent 4px); }

.document { flex: 1; min-width: 0; display: flex; flex-direction: column; border: solid; border-width: 1px 2px 0 0; border-color: #444 #fff #fff #444; }
.viewrow { flex: 1; min-height: 0; display: flex; }
.drawing { flex: 1; min-width: 0; height: 100%; background: #000; }
.cadtext { fill: #eee; font: 12px "Liberation Mono", monospace; }
.axis { font: 14px "Noto Sans", sans-serif; }
.track { flex: 1; background: repeating-conic-gradient(#ececec 0 25%, #c4c4c4 0 50%) 0 0 / 2px 2px; }
.vscroll { width: 18px; flex: none; display: flex; flex-direction: column; }
.vscroll .track { flex: 246; }
.vscroll .track.low { flex: 122; }
.vscroll button, .vscroll .thumb { height: 18px; }
.vscroll button, .thumb, .hscroll button, .tabnav button, .split { background: var(--face); border: 1px solid; border-color: #fff #222 #222 #fff; box-shadow: inset -1px -1px #999; }
.up::after, .down::after, .prev::after, .next::after { content: ""; border: 4px solid transparent; }
.up::after { border-bottom-color: #000; border-top: 0; }
.down::after { border-top-color: #000; border-bottom: 0; }
.prev::after { border-right-color: #000; border-left: 0; }
.next::after { border-left-color: #000; border-right: 0; }
.tabrow { flex: none; height: 17px; display: flex; }
.tabnav { display: flex; }
.tabnav button { width: 18px; border-color: #fff var(--shade) var(--shade) #fff; box-shadow: none; }
.prev.stop::before, .next.stop::before { content: ""; width: 2px; height: 8px; background: #000; }
.next.stop::before { order: 2; }
.tabs { display: flex; padding-left: 5px; font-size: 11px; }
.tabs button { position: relative; z-index: 0; padding: 0 6px; margin-right: -1px; }
.tabs button::before, .tabs button::after { content: ""; position: absolute; z-index: -1; top: 0; bottom: 0; width: 50%; border-bottom: 1px solid #000; }
.tabs button::before { left: 2px; border-left: 1px solid #000; transform: skewX(14deg); }
.tabs button::after { right: 2px; border-right: 1px solid #000; transform: skewX(-14deg); }
.tabs .active { color: #fff; }
.tabs .active::before, .tabs .active::after { background: #000; }
.hscroll { margin-left: auto; width: 35.4%; min-width: 120px; display: flex; padding-right: 18px; }
.hscroll button { width: 18px; }
.hscroll .thumb { width: 17px; }
.split { width: 6px; }

/* command line and status bar */
.command { flex: none; height: 39px; display: flex; align-items: center; padding: 8px 26px 0 6px; border-top: 1px solid #fff; border-bottom: 1px solid var(--shade); background: linear-gradient(transparent 4px, var(--shade) 4px 5px, #000 5px 6px, transparent 6px); }
.command .grip { height: 20px; margin-right: 2px; }
.command input { flex: 1; min-width: 0; height: 26px; padding: 11px 0 0 2px; background: #fff; border: 1px solid; border-color: #000 #eee #eee #000; font: 13px/14px "Liberation Mono", monospace; outline: 0; }
.status { flex: none; height: 23px; display: flex; align-items: center; gap: 3px; padding: 2px 2px 0 5px; border-top: 1px solid #fff; border-bottom: 1px solid #e6e6e6; }
.status button { height: 18px; padding: 0 4px; border: 1px solid; border-color: #fff var(--shade) var(--shade) #fff; }
.status .on { border-color: #222 #fff #fff #222; }
.coords { flex: 0 1 239px; height: 18px; padding-left: 1px; font-size: 11px; line-height: 16px; border: 1px solid; border-color: var(--shade) #eee #eee var(--shade); }
.status .tray { margin-left: auto; width: 23px; padding: 0; border-color: var(--shade) #fff #fff var(--shade); }
.tray svg { width: 17px; height: 17px; }
.status .more { border: 0; padding: 0 1px; }
.more::after { content: ""; border: 4px solid transparent; border-top-color: #000; border-bottom: 0; }
```
